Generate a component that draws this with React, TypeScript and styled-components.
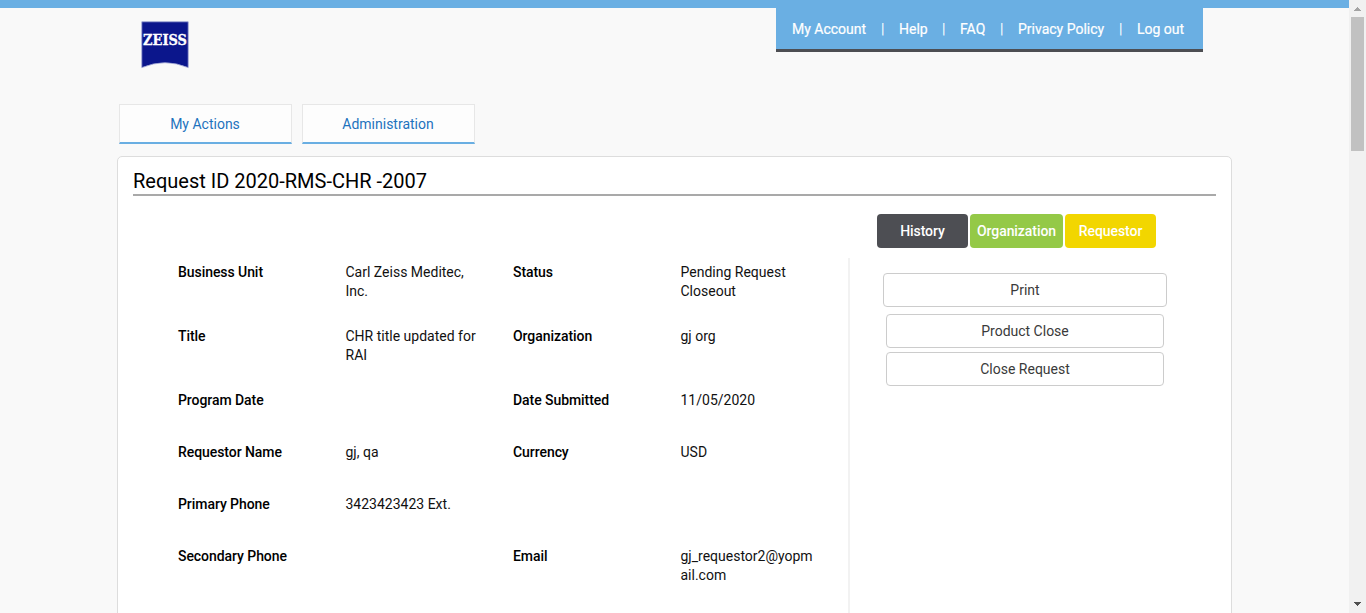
import React from "react";
import styled, { createGlobalStyle } from "styled-components";

const GlobalStyle = createGlobalStyle`
  *, *::before, *::after { box-sizing: border-box; }
  html, body { margin: 0; padding: 0; overflow: hidden; }
  body { font-family: Roboto, "Liberation Sans", sans-serif; font-size: 14px; color: #000; background: #f9f9f9; }
`;

const Screen = styled.div`
  display: flex;
  width: 1366px;
  height: 613px;
  overflow: hidden;
`;

const Page = styled.div`
  flex: 1;
  border-top: 8px solid #6aafe3;
  background: #f9f9f9;
  padding-left: 117px;
  overflow: hidden;
`;

const Header = styled.header`
  display: flex;
  justify-content: space-between;
  align-items: flex-start;
  width: 1086px;
  height: 96px;
`;

const Logo = styled.svg`
  display: block;
  margin: 13px 0 0 24px;
`;

const AccountNav = styled.nav`
  display: flex;
  width: 427px;
  height: 44px;
  padding: 12px 0 0 16px;
  background: #6aafe3;
  border-bottom: 3px solid #4d4e53;
`;

const NavLink = styled.a<{ $w: number }>`
  flex: none;
  width: ${(p) => p.$w}px;
  color: #fff;
  line-height: 19px;
  white-space: nowrap;
  -webkit-text-stroke: 0.2px #fff;
`;

const NavDivider = styled.span<{ $w: number }>`
  flex: none;
  width: ${(p) => p.$w}px;
  color: #fff;
  line-height: 18px;
`;

const Tabs = styled.div`
  display: flex;
  gap: 10px;
  padding-left: 2px;
`;

const Tab = styled.a`
  width: 173px;
  height: 40px;
  border: 1px solid #e7e7e7;
  border-bottom: 2px solid #69aee2;
  background: #fdfdfd;
  color: #1e73be;
  line-height: 38px;
  text-align: center;
  text-indent: -1px;
`;

const Card = styled.main`
  width: 1115px;
  height: 700px;
  margin-top: 12px;
  padding: 10px 15px;
  background: #fff;
  border: 1px solid #ddd;
  border-radius: 5px;
`;

const Title = styled.h1`
  margin: 0;
  height: 29px;
  border-bottom: 2px solid #a9a9a9;
  font-size: 20px;
  font-weight: 400;
  line-height: 28px;
`;

const Body = styled.div`
  display: flex;
`;

const Details = styled.section`
  width: 717px;
  margin-top: 62px;
  padding: 5px 0 0 45px;
  height: 500px;
  border-right: 2px solid #f2f2f2;
`;

const Row = styled.div<{ $h: number }>`
  display: grid;
  grid-template-columns: 167.5px 167.5px 167.5px 140px;
  height: ${(p) => p.$h}px;
  line-height: 19px;
`;

const Label = styled.span`
  font-weight: 500;
  letter-spacing: -0.06px;
`;

const Value = styled.span`
  width: 138px;
  font-weight: 400;
  color: #111;
  word-break: break-word;
`;

const Aside = styled.aside`
  width: 350px;
  padding-top: 18px;
`;

const Actions = styled.div`
  display: flex;
  gap: 2px;
  padding-left: 27px;
`;

const ActionButton = styled.button<{ $w: number; $bg: string }>`
  width: ${(p) => p.$w}px;
  height: 34px;
  padding: 0;
  border: 0;
  border-radius: 4px;
  background: ${(p) => p.$bg};
  color: #fff;
  font: 500 14px/34px Roboto, sans-serif;
  letter-spacing: -0.06px;
`;

const Stack = styled.div`
  display: flex;
  flex-direction: column;
  align-items: center;
  width: 284px;
  margin: 25px 0 0 33px;
`;

const OutlineButton = styled.button<{ $w: number; $gap?: number }>`
  width: ${(p) => p.$w}px;
  height: 34px;
  margin-bottom: ${(p) => p.$gap ?? 4}px;
  padding: 0;
  border: 1px solid #ccc;
  border-radius: 4px;
  background: #fff;
  color: #3a3a3a;
  font: 400 14px/32px Roboto, sans-serif;
`;

const Scrollbar = styled.div`
  display: flex;
  flex-direction: column;
  align-items: center;
  width: 17px;
  background: #f1f1f1;
`;

const Thumb = styled.div`
  width: 13px;
  height: 134px;
  margin-bottom: auto;
  background: #c1c1c1;
`;

const Arrow = styled.svg`
  display: block;
  width: 17px;
  height: 17px;
`;

type Cell = [string, string, string, string];

const rows: { h: number; cells: Cell }[] = [
  { h: 64, cells: ["Business Unit", "Carl Zeiss Meditec, Inc.", "Status", "Pending Request Closeout"] },
  { h: 64, cells: ["Title", "CHR title updated for RAI", "Organization", "gj org"] },
  { h: 52, cells: ["Program Date", "", "Date Submitted", "11/05/2020"] },
  { h: 52, cells: ["Requestor Name", "gj, qa", "Currency", "USD"] },
  { h: 52, cells: ["Primary Phone", "3423423423 Ext.", "", ""] },
  { h: 52, cells: ["Secondary Phone", "", "Email", "gj_requestor2@yopmail.com"] },
];

export default function App() {
  return (
    <Screen>
      <GlobalStyle />
      <Page>
        <Header>
          <Logo width="48" height="48" viewBox="0 0 48 48" aria-label="ZEISS">
            <path d="M.8.8H47.2V46.6Q24 36.8.8 46.6Z" fill="#0b168c" stroke="#9da3d3" strokeWidth=".8" />
            <text x="2" y="23.9" textLength="44" lengthAdjust="spacingAndGlyphs" fill="#fff" stroke="#fff" strokeWidth=".3" fontFamily="DejaVu Serif, serif" fontWeight="700" fontSize="14">ZEISS</text>
          </Logo>
          <AccountNav>
            <NavLink $w={89}>My Account</NavLink>
            <NavDivider $w={18}>|</NavDivider>
            <NavLink $w={43}>Help</NavLink>
            <NavDivider $w={18}>|</NavDivider>
            <NavLink $w={40}>FAQ</NavLink>
            <NavDivider $w={18}>|</NavDivider>
            <NavLink $w={101}>Privacy Policy</NavLink>
            <NavDivider $w={18}>|</NavDivider>
            <NavLink $w={50}>Log out</NavLink>
          </AccountNav>
        </Header>
        <Tabs>
          <Tab>My Actions</Tab>
          <Tab>Administration</Tab>
        </Tabs>
        <Card>
          <Title>Request ID 2020-RMS-CHR -2007</Title>
          <Body>
            <Details>
              {rows.map((r) => (
                <Row key={r.cells[0]} $h={r.h}>
                  <Label>{r.cells[0]}</Label>
                  <Value>{r.cells[1]}</Value>
                  <Label>{r.cells[2]}</Label>
                  <Value>{r.cells[3]}</Value>
                </Row>
              ))}
            </Details>
            <Aside>
              <Actions>
                <ActionButton $w={91} $bg="#4d4e53">History</ActionButton>
                <ActionButton $w={93} $bg="#94c947">Organization</ActionButton>
                <ActionButton $w={91} $bg="#f2d600">Requestor</ActionButton>
              </Actions>
              <Stack>
                <OutlineButton $w={284} $gap={7}>Print</OutlineButton>
                <OutlineButton $w={278}>Product Close</OutlineButton>
                <OutlineButton $w={278}>Close Request</OutlineButton>
              </Stack>
            </Aside>
          </Body>
        </Card>
      </Page>
      <Scrollbar>
        <Arrow viewBox="0 0 17 17" shapeRendering="crispEdges"><path d="M5 11V10H6V9H7V8H8V7H9V8H10V9H11V10H12V11Z" fill="#a3a3a3" /></Arrow>
        <Thumb />
        <Arrow viewBox="0 0 17 17" shapeRendering="crispEdges"><path d="M5 6V7H6V8H7V9H8V10H9V9H10V8H11V7H12V6Z" fill="#505050" /></Arrow>
      </Scrollbar>
    </Screen>
  );
}
